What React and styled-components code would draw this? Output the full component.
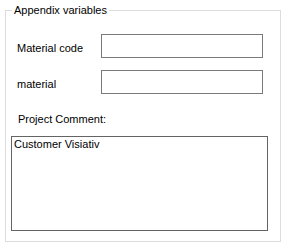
import React from "react";
import styled, { createGlobalStyle } from "styled-components";

const Global = createGlobalStyle`
    html, body {
        margin: 0;
        padding: 0;
        background: #fff;
    }
    body {
        font-family: "Liberation Sans", Arial, sans-serif;
        font-size: 11px;
        color: #000;
    }
`;

const Page = styled.div`
    width: 281px;
    height: 244px;
    padding: 10px 0 0 5px;
    box-sizing: border-box;
`;

const Group = styled.div`
    position: relative;
    width: 276px;
    height: 232px;
    box-sizing: border-box;
    border: 1px solid #dcdcdc;
    padding-top: 23px;
    display: flex;
    flex-direction: column;
`;

const Legend = styled.span`
    position: absolute;
    top: -7px;
    left: 6px;
    padding: 0 2px;
    line-height: 13px;
    background: #fff;
`;

const Row = styled.div`
    display: flex;
    align-items: flex-start;
    height: 24px;
    margin-top: ${(p) => p.gap || 0}px;
`;

const Label = styled.label`
    width: 84px;
    margin: 8px 0 0 11px;
    line-height: 13px;
    white-space: nowrap;
`;

const Field = styled.input`
    width: 162px;
    height: 24px;
    box-sizing: border-box;
    margin: 0;
    border: 1px solid #7a7a7a;
    padding: 2px 3px;
    font: inherit;
    outline: none;
`;

const Caption = styled.div`
    margin: 19px 0 0 12px;
    line-height: 13px;
`;

const Comment = styled.textarea`
    width: 257px;
    height: 95px;
    box-sizing: border-box;
    margin: 10px 0 0 5px;
    border: 1px solid #646464;
    padding: 1px 2px;
    font: inherit;
    line-height: 13px;
    resize: none;
    outline: none;
    overflow: hidden;
`;

const App = () => {
    return (
        <>
            <Global />
            <Page>
                <Group>
                    <Legend>Appendix variables</Legend>
                    <Row>
                        <Label>Material code</Label>
                        <Field />
                    </Row>
                    <Row gap={12}>
                        <Label>material</Label>
                        <Field />
                    </Row>
                    <Caption>Project Comment:</Caption>
                    <Comment defaultValue="Customer Visiativ" />
                </Group>
            </Page>
        </>
    );
};

export default App;
